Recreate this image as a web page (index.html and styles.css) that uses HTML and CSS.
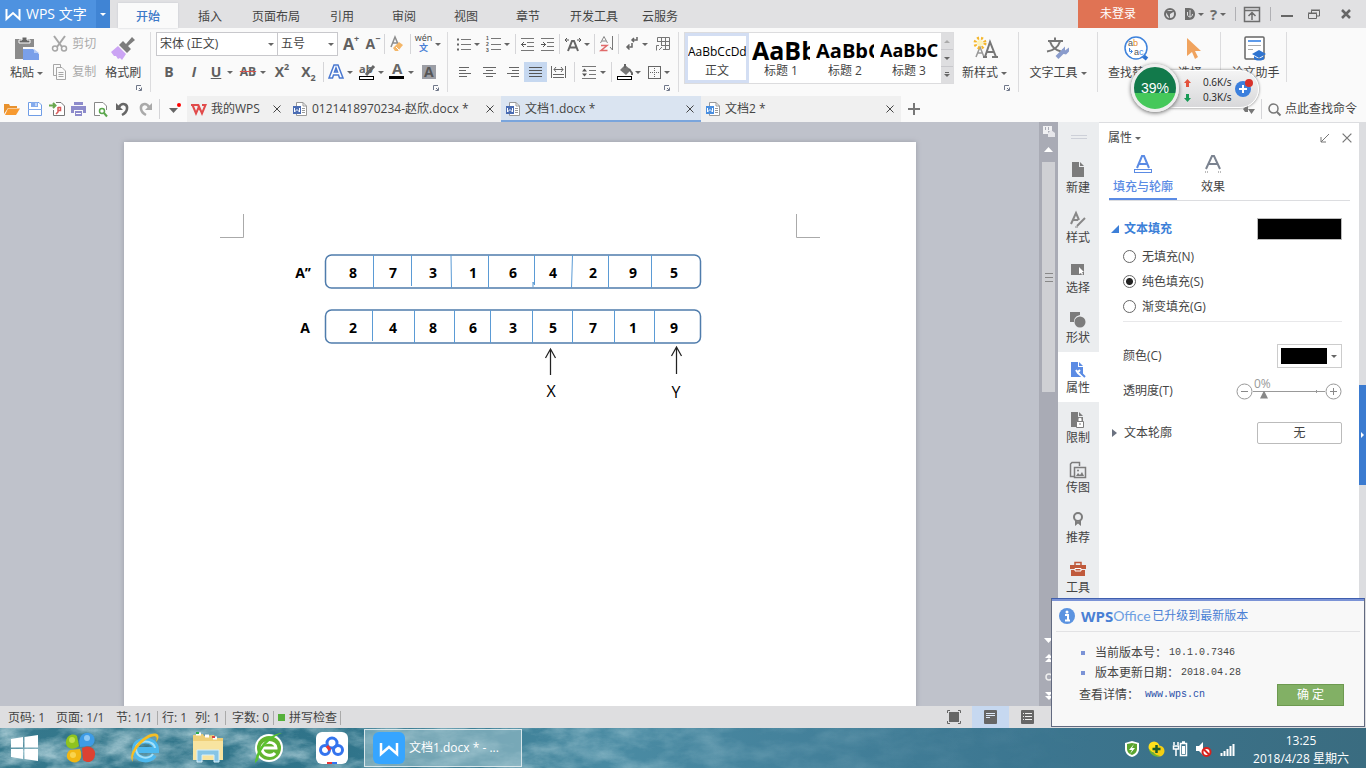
FILE: index.html
```html
<!DOCTYPE html>
<html lang="zh-CN">
<head>
    <meta charset="UTF-8">
    <meta name="viewport" content="width=device-width, initial-scale=1.0">
    <title>文档1.docx - WPS 文字</title>
    <link rel="stylesheet" href="styles.css">
</head>
<body>
    <!-- shared icons -->
    <svg class="sprite" aria-hidden="true">
        <symbol id="i-close" viewBox="0 0 8 8"><path d="M0.5 0.5L7.5 7.5M7.5 0.5L0.5 7.5" fill="none" stroke="currentColor"/></symbol>
        <symbol id="i-launch" viewBox="0 0 6 6"><path d="M0.5 5V0.5H5" fill="none" stroke="#6f7789"/><path d="M2.5 5.5H5.5V2.5M3 3L5 5" fill="none" stroke="#6f7789"/></symbol>
        <symbol id="i-doc" viewBox="0 0 14 14">
            <path d="M3.5 0.5H10L13.5 4V13.5H3.5Z" fill="#fff" stroke="#999"/>
            <path d="M10 0.5V4H13.5M9 6.5H12M9 8.5H12M9 10.5H12" fill="none" stroke="#999"/>
            <rect y="4" width="8" height="8" fill="currentColor"/>
            <path d="M1.5 6V10L4 7.500L6.500 10V6" fill="none" stroke="#fff"/>
        </symbol>
        <symbol id="i-page" viewBox="0 0 16 16"><path d="M2 0H9V5H14V15H2ZM10 0L14 4H10Z" fill="currentColor"/></symbol>
    </svg>

    <header class="titlebar">
        <button type="button" class="app-btn">
            <svg width="16" height="14" viewBox="0 0 16 14"><path d="M1.500 2V12L8 6L14.500 12V2" fill="none" stroke="#fff" stroke-width="2"/></svg>
            WPS 文字
        </button>
        <button type="button" class="app-more" aria-label="菜单"><i class="caret"></i></button>
        <nav class="menu">
            <a href="#" class="menu-on">开始</a>
            <a href="#">插入</a>
            <a href="#" class="menu-wide">页面布局</a>
            <a href="#">引用</a>
            <a href="#">审阅</a>
            <a href="#">视图</a>
            <a href="#">章节</a>
            <a href="#" class="menu-wide">开发工具</a>
            <a href="#">云服务</a>
        </nav>
        <button type="button" class="login">未登录</button>
        <div class="win-tools">
            <button type="button" aria-label="皮肤"><svg width="12" height="12" viewBox="0 0 12 12"><circle cx="6" cy="6" r="5" fill="none" stroke="#6d6d6d" stroke-width="2"/><path d="M1 3L11 3L6 6L6 11L3 6Z" fill="#6d6d6d"/></svg></button>
            <button type="button" aria-label="稻壳"><svg width="10" height="12" viewBox="0 0 10 12"><path d="M0 0H4C8 0 10 3 10 6S8 12 4 12H0Z" fill="#6d6d6d"/><path d="M5 2V9M2.500 4V7C2.500 8 4 9 5 9C6 9 7.500 8 7.500 6" fill="none" stroke="#e1e1e3"/></svg><i class="caret"></i></button>
            <button type="button" aria-label="帮助"><b class="help">?</b><i class="caret"></i></button>
            <span class="bar"></span>
            <button type="button" aria-label="隐藏功能区"><svg width="16" height="15" viewBox="0 0 16 15"><path d="M0.500 0.500H15.500V14.500H0.500ZM0.500 3.500H15.500M8 13V6M4.500 9L8 5.500L11.500 9" fill="none" stroke="#6d6d6d" stroke-width="1.500"/></svg></button>
            <span class="bar"></span>
            <button type="button" aria-label="最小化"><svg width="12" height="12" viewBox="0 0 12 12"><path d="M0 8H12" stroke="#666" stroke-width="2"/></svg></button>
            <button type="button" aria-label="还原"><svg width="12" height="11" viewBox="0 0 12 11"><path d="M0.500 4.500H8.500V9.500H0.500ZM3.500 4V1.500H11.500V7H9" fill="none" stroke="#666"/><path d="M0 4H9M3 1H12" stroke="#666"/></svg></button>
            <button type="button" aria-label="关闭"><svg width="10" height="10" viewBox="0 0 10 10"><path d="M1 1L9 9M9 1L1 9" stroke="#666" stroke-width="2.500"/></svg></button>
        </div>
    </header>

    <section class="ribbon">
        <div class="group clip">
            <button type="button" class="big">
                <svg width="26" height="25" viewBox="0 0 26 25"><path d="M1 2H20V10H9V22H1Z" fill="#8b8b8b"/><path d="M5 6V3H8V0H13V3H16V6Z" fill="#666" stroke="#fafafa"/><path d="M9 12H19L25 17V23H9Z" fill="#7aa0ea"/><path d="M20 12V16H25" fill="#b8cdf5"/></svg>
                <span>粘贴 <i class="caret"></i></span>
            </button>
            <div class="clip-col">
                <button type="button"><svg width="15" height="16" viewBox="0 0 15 16"><path d="M2 0L10 11M13 0L5 11" stroke="#a6a6a6" stroke-width="2"/><circle cx="3" cy="12.500" r="2.500" fill="none" stroke="#a6a6a6" stroke-width="1.500"/><circle cx="12" cy="12.500" r="2.500" fill="none" stroke="#a6a6a6" stroke-width="1.500"/></svg>剪切</button>
                <button type="button"><svg width="15" height="16" viewBox="0 0 15 16"><path d="M4 11.500H1.500V0.500H8.500V3M4.500 3.500H10L13.500 7V15.500H4.500ZM6.500 8.500H11.500M6.500 10.500H11.500M6.500 12.500H11.500" fill="none" stroke="#a6a6a6"/></svg>复制</button>
            </div>
            <button type="button" class="big">
                <svg width="24" height="25" viewBox="0 0 24 25"><path d="M21 0L24 3L17 9L20 12L16 16L8 8L12 4L15 7Z" fill="#7d7d7d"/><path d="M7 9L15 17L11 23L9 21L7 22L5 19L3 19L0 15Z" fill="#cba4f4"/></svg>
                <span>格式刷</span>
            </button>
            <svg class="launch"><use href="#i-launch"/></svg>
        </div>

        <div class="group font-group">
            <div class="row row-font1">
                <label class="pick"><select aria-label="字体"><option>宋体 (正文)</option></select><i class="caret"></i></label>
                <label class="pick"><select aria-label="字号"><option>五号</option></select><i class="caret"></i></label>
                <button type="button" class="glyph glyph-lg">A<sup>+</sup></button>
                <button type="button" class="glyph">A<sup>−</sup></button>
                <span class="bar"></span>
                <button type="button" aria-label="清除格式"><svg width="14" height="16" viewBox="0 0 14 16"><path d="M1 11L5 1L8 8M2.500 7H7" fill="none" stroke="#8d8d8d" stroke-width="1.500"/><path d="M3 12L9 6L13 9L8 15L5 15Z" fill="#f4b668"/><path d="M6 11L9 14" stroke="#fff"/></svg></button>
                <span class="bar"></span>
                <button type="button" class="pinyin"><span><small>wén</small><b>文</b></span><i class="caret"></i></button>
            </div>
            <div class="row row-font2">
                <button type="button" class="glyph">B</button>
                <button type="button" class="glyph"><em>I</em></button>
                <button type="button" class="glyph"><u>U</u><i class="caret"></i></button>
                <button type="button" class="glyph strike"><s>AB</s><i class="caret"></i></button>
                <button type="button" class="glyph">X<sup>2</sup></button>
                <button type="button" class="glyph">X<sub>2</sub></button>
                <span class="bar"></span>
                <button type="button" aria-label="文字效果"><svg width="16" height="16" viewBox="0 0 16 16"><path d="M1 14L6 1H10L15 14H11.500L10.500 11H5.500L4.500 14ZM6.500 8H9.500L8 4Z" fill="#fff" stroke="#4a78d0" stroke-width="1.500"/></svg><i class="caret"></i></button>
                <button type="button" aria-label="突出显示"><svg width="16" height="16" viewBox="0 0 16 16"><text x="0" y="9" font-size="11" font-weight="700" fill="#666">ab</text><path d="M7 11L15 2" stroke="#666" stroke-width="3"/><rect x="0.500" y="12.500" width="14" height="3" fill="#fff" stroke="#000"/></svg><i class="caret"></i></button>
                <button type="button" aria-label="字体颜色"><svg width="16" height="16" viewBox="0 0 16 16"><text x="3" y="10" font-size="15" font-weight="700" fill="#666">A</text><rect y="12" width="15" height="3"/></svg><i class="caret"></i></button>
                <button type="button" aria-label="字符底纹"><svg width="14" height="14" viewBox="0 0 14 14"><rect width="14" height="14" fill="#9c9ea5"/><text x="2" y="12" font-size="14" font-weight="700" fill="#555">A</text></svg></button>
            </div>
            <svg class="launch"><use href="#i-launch"/></svg>
        </div>

        <div class="group para-group">
            <div class="row row-para1">
                <button type="button" aria-label="项目符号"><svg width="14" height="14" viewBox="0 0 14 14"><path d="M0 2.500H2M0 7.500H2M0 12.500H2" stroke="#666" stroke-width="2"/><path d="M4 2.500H14M4 7.500H14M4 12.500H14" stroke="#777"/></svg><i class="caret"></i></button>
                <button type="button" aria-label="编号"><svg class="digits" width="15" height="16" viewBox="0 0 15 16"><text x="0" y="4">1</text><text x="0" y="10">2</text><text x="0" y="16">3</text><path d="M5 2.500H15M5 8.500H15M5 13.500H15" stroke="#777"/></svg><i class="caret"></i></button>
                <span class="bar"></span>
                <button type="button" aria-label="减少缩进"><svg width="13" height="13" viewBox="0 0 13 13"><path d="M0 0.500H13M6 4.500H13M6 8.500H13M0 12.500H13" stroke="#777"/><path d="M0 6.500H5M3 4L0.500 6.500L3 9" fill="none" stroke="#555"/></svg></button>
                <button type="button" aria-label="增加缩进"><svg width="13" height="13" viewBox="0 0 13 13"><path d="M0 0.500H13M6 4.500H13M6 8.500H13M0 12.500H13" stroke="#777"/><path d="M0 6.500H5M2 4L4.500 6.500L2 9" fill="none" stroke="#555"/></svg></button>
                <span class="bar"></span>
                <button type="button" aria-label="中文版式"><svg width="16" height="15" viewBox="0 0 16 15"><path d="M3 14L7 4H9L13 14M5 10.500H11" fill="none" stroke="#666" stroke-width="2"/><path d="M0 3H4M2 1L0 3L2 5M16 3H12M14 1L16 3L14 5" fill="none" stroke="#555"/></svg><i class="caret"></i></button>
                <span class="bar"></span>
                <button type="button" aria-label="排序"><svg width="14" height="16" viewBox="0 0 14 16"><path d="M0.500 7L4 0.500L7.500 7M2 5H6" fill="none" stroke="#888"/><path d="M1 9.500H7L1 14.500H7.500" fill="none" stroke="#e06a6a" stroke-width="1.500"/><path d="M12.500 0V14L10 11" fill="none" stroke="#777"/></svg></button>
                <span class="bar"></span>
                <button type="button" aria-label="段落标记"><svg width="12" height="14" viewBox="0 0 12 14"><path d="M10 0V3H5M7 1L5 3L7 5M5 6V10H0M2.500 7.500L0 10L2.500 12.500" fill="none" stroke="#666" stroke-width="1.500"/></svg><i class="caret"></i></button>
                <button type="button" aria-label="表格"><svg width="14" height="14" viewBox="0 0 14 14"><path d="M1.500 5V0.500H13.500V12.500H7M5.500 0.500V8M9.500 0.500V12.500M1.500 4.500H13.500M5 8.500H13.500M0.500 13.500V8.500H3M3 13L6 10" fill="none" stroke="#777"/></svg></button>
            </div>
            <div class="row row-para2">
                <button type="button" aria-label="左对齐"><svg width="13" height="11" viewBox="0 0 13 11"><path d="M0 0.500H10M0 3.500H7M0 6.500H12M0 9.500H8" stroke="#666"/></svg></button>
                <button type="button" aria-label="居中"><svg width="13" height="11" viewBox="0 0 13 11"><path d="M0 0.500H13M3 3.500H10M0 6.500H13M3 9.500H10" stroke="#666"/></svg></button>
                <button type="button" aria-label="右对齐"><svg width="13" height="11" viewBox="0 0 13 11"><path d="M3 0.500H13M6 3.500H13M1 6.500H13M5 9.500H13" stroke="#666"/></svg></button>
                <button type="button" class="pressed" aria-label="两端对齐"><svg width="13" height="11" viewBox="0 0 13 11"><path d="M0 0.500H13M0 3.500H13M0 6.500H13M0 9.500H13" stroke="#555"/></svg></button>
                <button type="button" aria-label="分散对齐"><svg width="15" height="12" viewBox="0 0 15 12"><path d="M0.500 0V12M14.500 0V12M2 8.500H13M2 11.500H13M3 3.500H12M5 1L3 3.500L5 6M10 1L12 3.500L10 6" fill="none" stroke="#666"/></svg></button>
                <span class="bar"></span>
                <button type="button" aria-label="行距"><svg width="15" height="13" viewBox="0 0 15 13"><path d="M0 0.500H14M7 4.500H14M7 8.500H14M0 12.500H14" stroke="#777"/><path d="M0 5.500L2.500 2.500L5 5.500ZM0 7.500L2.500 10.500L5 7.500Z" fill="#555"/></svg><i class="caret"></i></button>
                <span class="bar"></span>
                <button type="button" aria-label="底纹"><svg width="15" height="16" viewBox="0 0 15 16"><path d="M3 6L8 1L14 6L9 11Z" fill="#777"/><path d="M8 0V4M12 5L15 9V11" stroke="#666" stroke-width="2" fill="none"/><rect x="0.500" y="12.500" width="14" height="3" fill="#fff" stroke="#000"/></svg><i class="caret"></i></button>
                <button type="button" aria-label="边框"><svg width="13" height="13" viewBox="0 0 13 13"><rect x="0.500" y="0.500" width="12" height="12" fill="none" stroke="#666"/><path d="M6.500 2V11M2 6.500H11" stroke="#666" stroke-dasharray="1 1"/></svg><i class="caret"></i></button>
            </div>
            <svg class="launch"><use href="#i-launch"/></svg>
        </div>

        <div class="group style-group">
            <div class="gallery">
                <button type="button" class="style-on"><span class="demo">AaBbCcDd</span>正文</button>
                <button type="button"><span class="demo demo-1">AaBb</span>标题 1</button>
                <button type="button"><span class="demo demo-2">AaBbC</span>标题 2</button>
                <button type="button"><span class="demo demo-3">AaBbC</span>标题 3</button>
                <div class="gallery-nav">
                    <button type="button" aria-label="上"><i class="caret caret-up"></i></button>
                    <button type="button" aria-label="下"><i class="caret"></i></button>
                    <button type="button" aria-label="更多"><i class="caret caret-more"></i></button>
                </div>
            </div>
            <button type="button" class="big">
                <svg width="26" height="25" viewBox="0 0 26 25"><path d="M4 20L8 10L12 20M5 16H11" fill="none" stroke="#999" stroke-width="1.500"/><path d="M13 20L18 5L24 20M15 15H22M11 20H15M20 20H26" fill="none" stroke="#777" stroke-width="2"/><circle cx="8" cy="6" r="5" fill="none" stroke="#f5b72c" stroke-width="3" stroke-dasharray="2 2"/><circle cx="8" cy="6" r="3" fill="#fff3b8"/></svg>
                <span>新样式 <i class="caret"></i></span>
            </button>
            <svg class="launch"><use href="#i-launch"/></svg>
        </div>

        <div class="group tool-group">
            <button type="button" class="big">
                <svg width="24" height="24" viewBox="0 0 24 24"><path d="M2 3.500H17M9 0V3M4 4C6 10 11 13 15 14M14 4C12 10 7 13 1 14" fill="none" stroke="#777" stroke-width="2"/><path d="M11 20L18 13" stroke="#8a9ccc" stroke-width="4"/><path d="M23 10L19 13V9L16 12V16L20 17L23 14Z" fill="#8a9ccc"/></svg>
                <span>文字工具 <i class="caret"></i></span>
            </button>
        </div>
        <div class="group find-group">
            <button type="button" class="big">
                <svg width="25" height="25" viewBox="0 0 25 25"><path d="M18 18L23 22" stroke="#2f74d0" stroke-width="4"/><circle cx="12" cy="11" r="11" fill="#fff" stroke="#3f83dc" stroke-width="1.500"/><g class="find-text"><text x="4" y="9">a<tspan fill="#e58a2e">b</tspan></text><text x="10" y="18">a<tspan fill="#3f83dc">c</tspan></text></g><path d="M5.500 11V14.500H8M6.500 12.500L8.500 14.500L6.500 16.500" fill="none" stroke="#3f83dc"/></svg>
                <span>查找替换 <i class="caret"></i></span>
            </button>
            <button type="button" class="big">
                <svg width="16" height="25" viewBox="0 0 16 25"><path d="M1 1L15 14H9L12 20L9 22L6 15L1 19Z" fill="#f0a35e"/></svg>
                <span>选择 <i class="caret"></i></span>
            </button>
        </div>
        <div class="group paper-group">
            <button type="button" class="big">
                <svg width="22" height="25" viewBox="0 0 22 25"><rect x="1" y="0" width="19" height="22" rx="1" fill="#fff" stroke="#666" stroke-width="1.500"/><path d="M4 4H17" stroke="#5f9bea" stroke-width="2"/><path d="M4 8.500H17M4 12.500H9" stroke="#aaa"/><path d="M8 17L15 13L22 17L15 21Z" fill="#2f74d0"/><path d="M10 19V22C12 24 18 24 20 22V19L15 22Z" fill="#2f74d0"/></svg>
                <span>论文助手</span>
            </button>
        </div>
    </section>

    <!-- network speed ball floating above the window -->
    <aside class="speed">
        <div class="speed-pill">
            <p><svg width="7" height="8" viewBox="0 0 7 8"><path d="M3.500 0L7 4H5V8H2V4H0Z" fill="#e3523c"/></svg>0.6K/s</p>
            <p><svg width="7" height="8" viewBox="0 0 7 8"><path d="M3.500 8L7 4H5V0H2V4H0Z" fill="#179a55"/></svg>0.3K/s</p>
            <button type="button" class="speed-plus" aria-label="加速"><svg width="20" height="20" viewBox="0 0 20 20"><circle cx="9" cy="11" r="8" fill="#3b7fdd"/><path d="M9 7V15M5 11H13" stroke="#fff" stroke-width="2"/><circle cx="15" cy="5" r="4" fill="#d7322c"/></svg></button>
        </div>
        <div class="speed-ball">39%</div>
    </aside>

    <div class="docbar">
        <div class="quick">
            <button type="button" aria-label="打开"><svg width="16" height="12" viewBox="0 0 16 12"><path d="M0 11V1H5L6 3H13V5H4Z" fill="#e8912d"/><path d="M4 5.500H16L12 12H1Z" fill="#f79a31"/></svg></button>
            <button type="button" aria-label="保存"><svg width="14" height="14" viewBox="0 0 14 14"><path d="M0.500 0.500H11L13.500 3V13.500H0.500Z" fill="#fff" stroke="#6f9de6"/><path d="M3 0H10V5H3ZM0 7H14V8H0Z" fill="#85abec"/><path d="M8 1V4" stroke="#fff"/></svg></button>
            <button type="button" aria-label="输出为PDF"><svg width="16" height="14" viewBox="0 0 16 14"><path d="M7 0.500H12L15.500 4V13.500H4.500V8" fill="#fff" stroke="#777"/><path d="M0 3.500H6M4 1L6.500 3.500L4 6" fill="none" stroke="#6aa84f" stroke-width="2"/><path d="M9 5.500H11.500V8.500H9M9 5V10L7 12" fill="none" stroke="#d85959" stroke-width="1.500"/></svg></button>
            <button type="button" aria-label="打印"><svg width="15" height="14" viewBox="0 0 15 14"><path d="M3 0H12V3H3ZM0 4H15V11H12V8H3V11H0ZM4 9H11V14H4Z" fill="#8d8bcb"/><path d="M5 11.500H10" stroke="#fff"/></svg></button>
            <button type="button" aria-label="打印预览"><svg width="13" height="15" viewBox="0 0 13 15"><path d="M6 13.500H0.500V0.500H9L12.500 4V8" fill="#fff" stroke="#888"/><circle cx="8" cy="9" r="2.500" fill="none" stroke="#5aa64c" stroke-width="1.500"/><path d="M10 11L13 14.500" stroke="#5aa64c" stroke-width="2"/></svg></button>
            <button type="button" aria-label="撤销"><svg width="13" height="14" viewBox="0 0 13 14"><path d="M3 5C6 0 12 2 11 7C10.500 10 8 12 6 13" fill="none" stroke="#666" stroke-width="2.500"/><path d="M0 1V8H7Z" fill="#666"/></svg></button>
            <button type="button" aria-label="恢复"><svg width="13" height="14" viewBox="0 0 13 14"><path d="M10 5C7 0 1 2 2 7C2.500 10 5 12 7 13" fill="none" stroke="#aaa" stroke-width="2.500"/><path d="M13 1V8H6Z" fill="#aaa"/></svg></button>
            <span class="bar"></span>
            <button type="button" aria-label="自定义"><svg width="14" height="12" viewBox="0 0 14 12"><path d="M1 5H10L5.500 10Z" fill="#666"/><circle cx="11" cy="2" r="2" fill="#f00"/></svg></button>
        </div>
        <nav class="doctabs">
            <a href="#" class="doctab doctab-home"><svg width="16" height="11" viewBox="0 0 16 11"><path d="M0 1H7L9 6M1.500 1L5 9.500L8 2.500L11 9.500L14.500 1H11" fill="none" stroke="#e14a4a" stroke-width="2"/></svg><span>我的WPS</span><svg class="x"><use href="#i-close"/></svg></a>
            <a href="#" class="doctab"><svg class="doc-icon"><use href="#i-doc"/></svg><span>0121418970234-赵欣.docx *</span><svg class="x"><use href="#i-close"/></svg></a>
            <a href="#" class="doctab doctab-on"><svg class="doc-icon"><use href="#i-doc"/></svg><span>文档1.docx *</span><svg class="x"><use href="#i-close"/></svg></a>
            <a href="#" class="doctab"><svg class="doc-icon doc-light"><use href="#i-doc"/></svg><span>文档2 *</span><svg class="x"><use href="#i-close"/></svg></a>
        </nav>
        <button type="button" class="doc-add" aria-label="新建"><svg width="12" height="12" viewBox="0 0 12 12"><path d="M6 0V12M0 6H12" stroke="#777" stroke-width="2"/></svg></button>
        <svg class="doc-list" width="12" height="10" viewBox="0 0 12 10"><path d="M0 5L5 0V8H2ZM5 5H12L8.500 10Z" fill="#777"/></svg>
        <span class="bar"></span>
        <button type="button" class="search"><svg width="13" height="13" viewBox="0 0 13 13"><circle cx="5.500" cy="5.500" r="4.500" fill="none" stroke="#777" stroke-width="1.500"/><path d="M9 9L12.500 12.500" stroke="#777" stroke-width="2"/></svg>点此查找命令</button>
    </div>

    <main class="work">
        <div class="canvas">
            <article class="paper">
                <svg class="drawing" width="792" height="300" viewBox="0 0 792 300">
                    <path d="M96 95.500H119.500V72M696 95.500H672.500V72" fill="none" stroke="#aaa"/>
                    <g fill="#fff" stroke="#4f7cac" stroke-width="1.500">
                        <rect x="201.500" y="113" width="375" height="33" rx="6"/>
                        <rect x="201.500" y="168" width="375" height="33" rx="6"/>
                    </g>
                    <path d="M249.500 113V146M287.500 113V144M327 113L327.500 146M364.500 113V146M410.500 113V143L409 140V145M448.500 113L447.500 146M484.500 113V146M527.500 113V146M248.500 168V199M290.500 168V201M330.500 168V201M366.500 168V201M408.500 168V201M448.500 168V201M490.500 168V201M530.500 168V201" fill="none" stroke="#5b9bd5"/>
                    <g class="nums">
                        <text x="179" y="136">A’’</text>
                        <text x="229" y="136">8</text><text x="269" y="136">7</text><text x="309" y="136">3</text>
                        <text x="349" y="136">1</text><text x="389" y="136">6</text><text x="429" y="136">4</text>
                        <text x="469" y="136">2</text><text x="509" y="136">9</text><text x="550" y="136">5</text>
                        <text x="181" y="191">A</text>
                        <text x="229" y="191">2</text><text x="269" y="191">4</text><text x="309" y="191">8</text>
                        <text x="349" y="191">6</text><text x="389" y="191">3</text><text x="429" y="191">5</text>
                        <text x="469" y="191">7</text><text x="509" y="191">1</text><text x="550" y="191">9</text>
                    </g>
                    <path d="M426.500 233V207M421.500 216L426.500 207L431.500 216M552.500 232V205M547.500 214L552.500 205L557.500 214" fill="none" stroke="#222" stroke-width="1.250"/>
                    <g class="marks"><text x="427" y="255">X</text><text x="552" y="256">Y</text></g>
                </svg>
            </article>
        </div>

        <div class="scroll">
            <svg width="12" height="12" viewBox="0 0 12 12"><path d="M0 0H9V5H5V8H0Z" fill="#f0f0f2"/><path d="M2.500 1V4M5.500 1V4" stroke="#a9abb5"/><path d="M5 7L8 4L12 7V11H5Z" fill="#e6e6ea"/></svg>
            <svg width="9" height="5" viewBox="0 0 9 5"><path d="M0 5L4.500 0L9 5Z" fill="#fff"/></svg>
            <div class="thumb"><svg width="8" height="9" viewBox="0 0 8 9"><path d="M0 0.500H8M0 4.500H8M0 8.500H8" stroke="#888"/></svg></div>
            <div class="scroll-end">
                <svg width="9" height="5" viewBox="0 0 9 5"><path d="M0 0L4.500 5L9 0Z" fill="#fff"/></svg>
                <svg width="8" height="8" viewBox="0 0 8 8"><path d="M0 4L4 0L8 4ZM0 8L4 4L8 8Z" fill="#fff"/></svg>
                <svg width="8" height="8" viewBox="0 0 8 8"><circle cx="4" cy="4" r="3" fill="none" stroke="#eee" stroke-width="1.500"/></svg>
                <svg width="8" height="8" viewBox="0 0 8 8"><path d="M0 0L4 4L8 0ZM0 4L4 8L8 4Z" fill="#fff"/></svg>
            </div>
        </div>

        <nav class="side">
            <span class="grip"></span>
            <a href="#"><svg class="ico"><use href="#i-page"/></svg>新建</a>
            <a href="#"><svg class="ico" viewBox="0 0 16 16"><path d="M1 12L6 1L9 8M3 8H8" fill="none" stroke="#888" stroke-width="2"/><path d="M7 14L15 6" stroke="#888" stroke-width="2"/><path d="M5 15H8" stroke="#888"/></svg>样式</a>
            <a href="#"><svg class="ico" viewBox="0 0 16 16"><path d="M1 2H14V13H1Z" fill="#7c7c7c"/><path d="M9 5L14 10H12L13 12L12 13L11 11L9 12Z" fill="#fff"/></svg>选择</a>
            <a href="#"><svg class="ico" viewBox="0 0 16 16"><path d="M0 0H10V3C6 4 4 6 4 10H0Z" fill="#7c7c7c"/><circle cx="10" cy="10" r="5.500" fill="#7c7c7c"/></svg>形状</a>
            <a href="#" class="side-on"><svg class="ico" viewBox="0 0 16 16"><path d="M1 0H8V5H13V15H1ZM9 0L13 4H9Z" fill="#5b8be4"/><path d="M6 8L8 11L14 16M7 11L10 8" fill="none" stroke="#fff" stroke-width="2"/><path d="M11 11L15 15" stroke="#5b8be4" stroke-width="2"/></svg>属性</a>
            <a href="#"><svg class="ico" viewBox="0 0 16 16"><path d="M1 0H8V5H13V15H1ZM9 0L13 4H9Z" fill="#7c7c7c"/><path d="M6.500 9.500H13.500V15.500H6.500ZM8 9V7C8 5 12 5 12 7V9M10 11V13" fill="#fff" stroke="#7c7c7c"/></svg>限制</a>
            <a href="#"><svg class="ico" viewBox="0 0 16 16"><path d="M4 14.500H0.500V2L2 0.500H9.500V4M4.500 5.500H15.500V15.500H4.500Z" fill="none" stroke="#7c7c7c" stroke-width="1.500"/><path d="M6 14L8 11L10 13L12 10L14 14Z" fill="#7c7c7c"/><circle cx="8" cy="8.500" r="1" fill="#7c7c7c"/></svg>传图</a>
            <a href="#"><svg class="ico" viewBox="0 0 16 16"><circle cx="8" cy="5" r="4" fill="none" stroke="#7c7c7c" stroke-width="2"/><path d="M5 8V14L8 11.500L11 14V8L8 10Z" fill="#7c7c7c"/></svg>推荐</a>
            <a href="#"><svg class="ico" viewBox="0 0 16 16"><path d="M5 3V0.500H11V3" fill="none" stroke="#c05a3c" stroke-width="1.500"/><path d="M0 3H16V7H0ZM1 8H15V14H1Z" fill="#c05a3c"/><path d="M5 6.500H11V9H5Z" fill="#c05a3c" stroke="#fff"/></svg>工具</a>
        </nav>

        <aside class="panel">
            <div class="panel-head">
                <h2>属性 <i class="caret"></i></h2>
                <svg width="10" height="9" viewBox="0 0 10 9"><path d="M9 0L1 8M1 3V8H6" fill="none" stroke="#777"/></svg>
                <svg class="x-big" viewBox="0 0 8 8"><use href="#i-close"/></svg>
            </div>
            <nav class="panel-tabs">
                <a href="#" class="panel-on"><svg width="18" height="18" viewBox="0 0 18 18"><path d="M3 13L8 1H10L15 13M5 9H13" fill="none" stroke="#5b8be4" stroke-width="2"/><rect x="0.500" y="14.500" width="17" height="3" fill="#fff" stroke="#5b8be4"/></svg>填充与轮廓</a>
                <a href="#"><svg width="18" height="18" viewBox="0 0 18 18"><path d="M2 14L8 1H10L16 14M5 9H13" fill="none" stroke="#7b8390" stroke-width="2"/><path d="M1 17H4M14 17H17" stroke="#bbb" stroke-width="2" stroke-dasharray="1 1"/></svg>效果</a>
            </nav>
            <div class="line line-head">
                <h3><svg width="8" height="8" viewBox="0 0 8 8"><path d="M8 0V8H0Z" fill="#3c7fd8"/></svg>文本填充</h3>
                <span class="swatch"></span>
            </div>
            <fieldset class="fills">
                <label><input type="radio" name="fill">无填充(N)</label>
                <label><input type="radio" name="fill" checked>纯色填充(S)</label>
                <label><input type="radio" name="fill">渐变填充(G)</label>
            </fieldset>
            <div class="line line-color">
                <span>颜色(C)</span>
                <button type="button" class="color" aria-label="颜色"><span></span><i class="caret"></i></button>
            </div>
            <div class="line line-alpha">
                <label for="alpha">透明度(T)</label>
                <div class="slider">
                    <button type="button" aria-label="减少"><svg width="17" height="17" viewBox="0 0 17 17"><circle cx="8.500" cy="8.500" r="7.500" fill="#fff" stroke="#999"/><path d="M5 8.500H12" stroke="#888"/></svg></button>
                    <div class="track"><output for="alpha">0%</output><input type="range" id="alpha" min="0" max="100" value="0"></div>
                    <button type="button" aria-label="增加"><svg width="17" height="17" viewBox="0 0 17 17"><circle cx="8.500" cy="8.500" r="7.500" fill="#fff" stroke="#999"/><path d="M5 8.500H12M8.500 5V12" stroke="#888"/></svg></button>
                </div>
            </div>
            <div class="line line-outline">
                <h3><svg width="8" height="8" viewBox="0 0 8 8"><path d="M1 0L6 4L1 8Z" fill="#6b7280"/></svg>文本轮廓</h3>
                <button type="button" class="none-btn">无</button>
            </div>
        </aside>
        <div class="edge"><button type="button" aria-label="展开"><i></i></button></div>
    </main>

    <footer class="status">
        <span class="st-page">页码: 1</span>
        <span class="st-pages">页面: 1/1</span>
        <span class="st-sec">节: 1/1</span>
        <span class="st-row">行: 1</span>
        <span class="st-col">列: 1</span>
        <span class="st-num">字数: 0</span>
        <span class="st-spell"><i></i>拼写检查</span>
        <div class="views">
            <button type="button" aria-label="全屏"><svg width="14" height="14" viewBox="0 0 14 14"><path d="M0.500 3V0.500H3M11 0.500H13.500V3M13.500 11V13.500H11M3 13.500H0.500V11" fill="none" stroke="#666"/><rect x="2" y="2" width="10" height="10" fill="#666"/></svg></button>
            <button type="button" class="view-on" aria-label="页面视图"><svg width="13" height="14" viewBox="0 0 13 14"><rect width="13" height="14" rx="1" fill="#666"/><path d="M2 3.500H11M2 5.500H11M2 7.500H6" stroke="#dde8f8"/></svg></button>
            <button type="button" aria-label="大纲"><svg width="13" height="14" viewBox="0 0 13 14"><rect width="13" height="14" rx="1" fill="#666"/><path d="M2 3.500H3M4 3.500H11M2 6.500H3M4 6.500H11M2 9.500H3M4 9.500H11" stroke="#eee"/></svg></button>
        </div>
    </footer>

    <section class="notice">
        <header>
            <svg width="18" height="18" viewBox="0 0 18 18"><circle cx="9" cy="9" r="8" fill="#5b93e0"/><circle cx="9" cy="5" r="1.500" fill="#fff"/><path d="M7 8H10V13M7 13.500H12" fill="none" stroke="#fff" stroke-width="2"/></svg>
            <strong>WPS</strong><span class="office">Office</span>
            <span class="notice-title">已升级到最新版本</span>
        </header>
        <ul>
            <li>当前版本号： <span class="mono">10.1.0.7346</span></li>
            <li>版本更新日期： <span class="mono">2018.04.28</span></li>
        </ul>
        <div class="notice-foot">
            <p>查看详情： <a href="#" class="mono">www.wps.cn</a></p>
            <button type="button">确 定</button>
        </div>
    </section>

    <footer class="taskbar">
        <svg class="sky" preserveAspectRatio="none" aria-hidden="true">
            <defs>
                <filter id="clouds" x="0" y="0" width="100%" height="100%">
                    <feTurbulence type="fractalNoise" baseFrequency="0.03 0.06" numOctaves="5" seed="11"/>
                    <feColorMatrix values="0 0 0 0 0.55  0 0 0 0 0.74  0 0 0 0 0.79  1.800 0 0 0 -0.600"/>
                </filter>
                <linearGradient id="fade"><stop offset="0" stop-color="#ddd"/><stop offset="0.350" stop-color="#aaa"/><stop offset="0.550" stop-color="#333"/><stop offset="0.800" stop-color="#000"/></linearGradient>
                <mask id="fade-mask"><rect width="100%" height="100%" fill="url(#fade)"/></mask>
            </defs>
            <g mask="url(#fade-mask)"><rect width="100%" height="100%" filter="url(#clouds)"/></g>
        </svg>
        <div class="apps">
            <button type="button" aria-label="开始"><svg width="28" height="26" viewBox="0 0 28 26"><path d="M0 4L12 2V12.500H0ZM13.500 2L27 0V12.500H13.500ZM0 14H12V24L0 22ZM13.500 14H27V26L13.500 24Z" fill="#fff"/></svg></button>
            <button type="button" aria-label="浏览"><svg width="32" height="32" viewBox="0 0 32 32"><path d="M14 14C6 20 0 15 1 9S8 1 12 4Z" fill="#8fc31f"/><path d="M15 15C12 5 18 0 24 1S32 11 26 14Z" fill="#3d9be6"/><path d="M15 17C19 27 13 32 7 30S0 22 5 18Z" fill="#f2b713"/><path d="M17 16C24 12 31 16 30 23S23 32 18 28Z" fill="#dc4232"/><circle cx="22" cy="6" r="3" fill="#8fcaf5"/><circle cx="7" cy="8" r="3" fill="#bfe04a"/><circle cx="8" cy="23" r="3" fill="#f9d44e"/></svg></button>
            <button type="button" aria-label="Internet Explorer"><svg width="32" height="32" viewBox="0 0 32 32"><path d="M25 23C21 30 6 29 6 17C6 6 27 5 27 18H9" fill="none" stroke="#4db8ee" stroke-width="6"/><path d="M24 22C20 28 7 27 7 16C7 8 25 7 26 16" fill="none" stroke="#a4e2fb" stroke-width="2"/><path d="M4 30C-4 20 18 -2 28 2C31 4 29 8 27 10C29 5 27 3 22 5C12 9 2 22 4 30Z" fill="#f6be25"/></svg></button>
            <button type="button" aria-label="资源管理器"><svg width="32" height="32" viewBox="0 0 32 32"><path d="M1 3L11 2L12 4L22 3L23 6H31V28H1Z" fill="#efcf78"/><path d="M4 2H9M13 4H17M21 6H25" stroke="#fff" stroke-width="3"/><path d="M4 1H7" stroke="#2dae4d" stroke-width="2"/><path d="M20 5H23" stroke="#d44" stroke-width="2"/><path d="M1 9H31V28H1Z" fill="#f8e4a0"/><path d="M5 30V18H27V30H22V23H10V30Z" fill="#86c5e6" stroke="#d7effa"/></svg></button>
            <button type="button" aria-label="360浏览器"><svg width="32" height="32" viewBox="0 0 32 32"><circle cx="16" cy="16" r="14" fill="#fff"/><circle cx="16" cy="16" r="12" fill="#62b52f"/><path d="M22 21C19 25 9 24 9 16S23 9 23 16H10" fill="none" stroke="#fff" stroke-width="3"/><path d="M2 31C3 18 14 2 29 1C18 5 7 16 5 28Z" fill="#58c12e"/></svg></button>
            <button type="button" aria-label="网盘"><svg width="32" height="32" viewBox="0 0 32 32"><rect width="32" height="32" rx="6" fill="#fff"/><g fill="none" stroke="#3474ee" stroke-width="3"><circle cx="16" cy="11" r="5"/><circle cx="9" cy="18" r="4.500"/><circle cx="22" cy="18" r="4.500"/></g><path d="M11 14L14 18" stroke="#e33" stroke-width="3"/><path d="M11 31H16" stroke="#e33" stroke-width="2"/><path d="M16 31H21" stroke="#3474ee" stroke-width="2"/></svg></button>
        </div>
        <button type="button" class="task"><svg width="32" height="32" viewBox="0 0 32 32"><rect width="32" height="32" rx="6" fill="#36a5ff"/><path d="M8 11V22L16 15L24 22V11" fill="none" stroke="#fff" stroke-width="2.500"/></svg>文档1.docx * - ...</button>
        <div class="tray">
            <svg width="16" height="16" viewBox="0 0 16 16"><path d="M8 0L15 2V8C15 12 12 15 8 16C4 15 1 12 1 8V2Z" fill="#fff"/><path d="M8 2L13 3V8C13 11 11 13 8 14C5 13 3 11 3 8V3Z" fill="#5ba52f"/><path d="M10 3L5 9H8L6 13L11 7H8Z" fill="#fff"/></svg>
            <svg width="17" height="16" viewBox="0 0 17 16"><circle cx="6" cy="6" r="5.500" fill="#ffe01b"/><circle cx="11" cy="10" r="5.500" fill="#f4cf12"/><path d="M1 8C2 14 8 17 12 15C7 14 4 11 1 8Z" fill="#6db52d"/><path d="M8.500 4V12M4.500 8H12.500" stroke="#1b5a2a" stroke-width="2.500"/></svg>
            <svg width="15" height="16" viewBox="0 0 15 16"><path d="M7.500 2.500H13.500V14.500H7.500ZM9 1H12M1 1V4M5 1V4M0.500 5H5.500V8H0.500ZM3 8V15" fill="none" stroke="#fff" stroke-width="1.500"/><path d="M9 5H12V13H9Z" fill="#fff"/></svg>
            <svg width="16" height="16" viewBox="0 0 16 16"><path d="M0 5H3L7 1V14L3 10H0Z" fill="#fff"/><circle cx="10.500" cy="11" r="4" fill="#fff" stroke="#d8201c" stroke-width="2"/><path d="M8 8.500L13 13.500" stroke="#d8201c" stroke-width="2"/></svg>
            <svg width="16" height="13" viewBox="0 0 16 13"><path d="M1.500 13V10M4.500 13V8M7.500 13V6M10.500 13V3M13.500 13V1" stroke="#fff" stroke-width="2"/></svg>
        </div>
        <time class="clock" datetime="2018-04-28T13:25">13:25<br>2018/4/28 星期六</time>
    </footer>
</body>
</html>
```
FILE: styles.css
```css
* {
    box-sizing: border-box;
}

body {
    display: flex;
    flex-direction: column;
    height: 100vh;
    margin: 0;
    overflow: hidden;
    background: #fafafa;
    color: #444;
    font-family: "Open Sans", "Noto Sans CJK SC", sans-serif;
    font-size: 12px;
    line-height: 16px;
}

h2,
h3,
p,
ul,
fieldset {
    margin: 0;
    padding: 0;
    border: 0;
    font-size: 12px;
    font-weight: normal;
    list-style: none;
}

a {
    color: inherit;
    text-decoration: none;
}

button,
select {
    margin: 0;
    padding: 0;
    border: 0;
    background: none;
    color: inherit;
    font: inherit;
    white-space: nowrap;
}

svg {
    flex: none;
    overflow: visible;
}

.sprite {
    position: absolute;
    width: 0;
    height: 0;
    overflow: hidden;
}

.caret {
    display: inline-block;
    flex: none;
    width: 0;
    border: 3px solid transparent;
    border-top-color: #666;
    border-bottom-width: 0;
    vertical-align: middle;
}

.bar {
    justify-self: center;
    width: 1px;
    height: 20px;
    background: #d5d5d8;
}

/* title bar */
.titlebar {
    display: flex;
    flex: none;
    height: 28px;
    background: #e1e1e3;
}

.app-btn {
    display: flex;
    align-items: center;
    gap: 5px;
    width: 96px;
    padding-left: 5px;
    background: #4e92e0;
    color: #fff;
    font-size: 14px;
}

.app-more {
    display: flex;
    align-items: center;
    justify-content: center;
    width: 14px;
    background: #4084d4;
}

.app-more .caret {
    border-top-color: #fff;
}

.menu {
    display: flex;
    flex: 1;
    align-items: flex-end;
    padding-left: 8px;
}

.menu a {
    width: 62px;
    height: 25px;
    padding-top: 1px;
    line-height: 25px;
    text-align: center;
}

.menu .menu-wide {
    width: 70px;
}

.menu .menu-on {
    width: 60px;
    margin-right: 1px;
    background: #fafafa;
    color: #3c78c8;
    font-weight: 500;
    box-shadow: 0 0 2px #c8cad0;
}

.login {
    width: 80px;
    background: #e07354;
    color: #fff;
}

.win-tools {
    display: grid;
    grid-template-columns: 24px 24px 24px 10px 24px 12px 22px 32px 32px;
    align-items: center;
    padding-right: 4px;
}

.win-tools button {
    display: flex;
    align-items: center;
    justify-content: center;
    gap: 3px;
}

.win-tools .bar {
    height: 14px;
    background: #b0b0b4;
}

.help {
    color: #6d6d6d;
    font-size: 15px;
}

/* ribbon */
.ribbon {
    display: flex;
    flex: none;
    height: 68px;
}

.group {
    position: relative;
    display: flex;
    flex: none;
    height: 60px;
    margin-top: 4px;
    border-right: 1px solid #dcdcde;
}

.launch {
    position: absolute;
    right: 8px;
    bottom: 1px;
    width: 6px;
    height: 6px;
}

.big {
    display: flex;
    flex-direction: column;
    align-items: center;
    gap: 3px;
    padding-top: 5px;
    height: 56px;
}

.big svg {
    height: 25px;
}

.clip {
    width: 151px;
    padding-left: 10px;
    gap: 9px;
}

.clip-col {
    display: flex;
    flex-direction: column;
    gap: 12px;
    padding-top: 4px;
    color: #aaa;
}

.clip-col button {
    display: flex;
    align-items: center;
    gap: 5px;
    height: 16px;
}

.row {
    display: grid;
    align-items: center;
    height: 24px;
}

.row button {
    display: flex;
    align-items: center;
    justify-content: center;
    gap: 3px;
    height: 20px;
}

.font-group,
.para-group {
    flex-direction: column;
    gap: 4px;
}

.font-group {
    width: 297px;
    padding-left: 5px;
}

.row-font1 {
    grid-template-columns: 122px 60px 26px 18px 4px 22px 4px 32px;
}

.row-font2 {
    grid-template-columns: 26px 24px 32px 30px 28px 25px 4px 31px 30px 30px 26px;
}

.para-group {
    width: 231px;
    padding-left: 5px;
}

.row-para1 {
    grid-template-columns: 30px 30px 4px 20px 20px 5px 30px 5px 19px 5px 32px 20px;
}

.row-para2 {
    grid-template-columns: 24px 24px 23px 23px 23px 8px 31px 4px 31px 30px;
}

.row .pressed {
    background: #c6d8f0;
}

.pick {
    position: relative;
    height: 24px;
    border: 1px solid #c8c8cc;
    background: #fff;
}

.pick + .pick {
    border-left: 0;
}

.pick select {
    width: 100%;
    height: 22px;
    padding-left: 3px;
    appearance: none;
}

.pick .caret {
    position: absolute;
    top: 10px;
    right: 3px;
}

.row .glyph {
    gap: 0;
    color: #606060;
    font-size: 14px;
    font-weight: 700;
}

.row .glyph .caret {
    margin-left: 6px;
}

.row .glyph-lg {
    font-size: 16px;
}

.glyph sup,
.glyph sub {
    font-size: 9px;
    line-height: 9px;
}

.glyph sup {
    align-self: flex-start;
}

.glyph sub {
    align-self: flex-end;
}

.row .strike {
    font-size: 12px;
}

.row .strike .caret {
    margin-left: 4px;
}

.strike s {
    text-decoration-color: #d9534f;
}

.digits {
    fill: #555;
    font: 700 5px "Liberation Sans", sans-serif;
}

.find-text {
    fill: #555;
    font: 9px/9px "Liberation Sans", sans-serif;
}

.pinyin small,
.pinyin b {
    display: block;
    font-size: 9px;
    line-height: 8px;
}

.pinyin b {
    color: #4a7fd6;
    line-height: 12px;
}

.style-group {
    width: 340px;
    padding-left: 5px;
    gap: 8px;
}

.gallery {
    display: flex;
    width: 270px;
    height: 52px;
    border: 1px solid #dcdcde;
    background: #fff;
}

.gallery > button {
    display: flex;
    flex-direction: column;
    width: 64px;
    padding: 4px 3px;
    align-items: center;
    overflow: hidden;
}

.gallery > .style-on {
    border: 3px solid #d3def3;
    padding: 1px 0;
}

.demo {
    width: 58px;
    height: 29px;
    overflow: hidden;
    color: #000;
    line-height: 29px;
    text-align: left;
}

.demo-1,
.demo-2,
.demo-3 {
    font-weight: 700;
    line-height: 27px;
}

.demo-1 {
    font-size: 25px;
}

.demo-2 {
    font-size: 20px;
}

.demo-3 {
    font-size: 18px;
}

.gallery-nav {
    display: flex;
    flex: 1;
    flex-direction: column;
    gap: 1px;
    background: #c8c8cc;
}

.gallery-nav button {
    flex: 1;
    line-height: 10px;
    background: #dedee0;
}

.caret-up {
    transform: rotate(180deg);
    border-top-color: #aaa;
}

.caret-more {
    box-shadow: 0 -3px 0 -1px #666;
}

.tool-group {
    justify-content: center;
    width: 79px;
}

.find-group {
    justify-content: space-between;
    width: 123px;
    padding: 0 9px 0 10px;
}

.paper-group {
    justify-content: center;
    width: 66px;
    height: 50px;
    padding-left: 4px;
}

/* speed ball */
.speed {
    position: absolute;
    top: 64px;
    right: 107px;
    width: 128px;
    height: 48px;
}

.speed-pill {
    position: absolute;
    top: 6px;
    right: 0;
    width: 104px;
    height: 38px;
    padding: 4px 0 0 28px;
    border: 1px solid #fff;
    border-radius: 19px;
    background: linear-gradient(#f4f4f4, #d8d8da);
    color: #222;
    box-shadow: 0 0 3px #777;
}

.speed-pill p {
    display: flex;
    align-items: center;
    gap: 12px;
    font-size: 10px;
    line-height: 15px;
}

.speed-plus {
    position: absolute;
    top: 7px;
    right: 4px;
    height: 20px;
}

.speed-ball {
    position: absolute;
    width: 48px;
    height: 48px;
    border: 3px solid #eee;
    border-radius: 50%;
    background: linear-gradient(#127a4b 62%, #45c85a 62%);
    color: #fff;
    font: 14px/42px "Liberation Sans", sans-serif;
    text-align: center;
    box-shadow: 0 1px 4px #666;
}

/* document tabs */
.docbar {
    display: flex;
    flex: none;
    align-items: center;
    height: 26px;
    padding-right: 9px;
}

.quick {
    display: grid;
    grid-template-columns: 22px 23px 21px 22px 22px 23px 22px 6px 26px;
    align-items: center;
    justify-items: center;
    width: 187px;
    padding-left: 1px;
}

.quick button {
    display: flex;
}

.doctabs {
    display: flex;
    align-self: stretch;
}

.doctab {
    display: flex;
    align-items: center;
    gap: 5px;
    width: 200px;
    padding: 0 7px 0 5px;
    background: #f0f0f0;
}

.doctab:nth-child(2) {
    width: 210px;
    padding-left: 2px;
}

.doctab-home {
    width: 104px;
    padding: 0 10px 0 4px;
    gap: 4px;
}

.doctab span {
    flex: 1;
    white-space: nowrap;
}

.doctab-on {
    background: #dae4f1;
    box-shadow: inset 0 -2px #7aa5dc;
}

.doc-icon {
    width: 14px;
    height: 14px;
    color: #4a6cb3;
}

.doc-light {
    color: #4a8fe0;
}

.x {
    width: 8px;
    height: 8px;
}

.doc-add {
    display: flex;
    margin-left: 7px;
}

.doc-list {
    margin-left: auto;
    margin-right: 6px;
}

.search {
    display: flex;
    align-items: center;
    gap: 4px;
    margin-left: 6px;
}

/* work area */
.work {
    display: flex;
    flex: 1;
    min-height: 0;
    overflow: hidden;
}

.canvas {
    flex: 1;
    overflow: hidden;
    padding-top: 20px;
    background: #bfc2cb;
}

.paper {
    width: 792px;
    min-height: 1122px;
    margin: 0 auto;
    background: #fff;
    box-shadow: 0 0 5px #9a9ca6;
}

.drawing {
    display: block;
    fill: #000;
}

.nums,
.marks {
    text-anchor: middle;
}

.nums {
    font-size: 14px;
    font-weight: 700;
}

.marks {
    font-size: 16px;
}

.scroll {
    display: flex;
    flex-direction: column;
    align-items: center;
    width: 19px;
    padding-top: 4px;
    background: #a9abb5;
}

.scroll > svg {
    margin-bottom: 9px;
}

.scroll > svg + svg {
    margin-bottom: 10px;
}

.thumb {
    display: flex;
    align-items: center;
    justify-content: center;
    width: 13px;
    height: 230px;
    background: #cfd0d4;
}

.scroll-end {
    display: flex;
    flex-direction: column;
    align-items: center;
    gap: 11px;
    margin-top: auto;
    padding-bottom: 6px;
}

.side {
    width: 41px;
    background: #ebedef;
}

.grip {
    display: block;
    width: 16px;
    height: 4px;
    margin: 13px auto;
    border: solid #cdd0d8;
    border-width: 1px 0;
}

.side a {
    display: flex;
    flex-direction: column;
    align-items: center;
    gap: 2px;
    height: 50px;
    padding: 10px 1px 0 0;
}

.ico {
    width: 16px;
    height: 16px;
    color: #7c7c7c;
}

.side .side-on {
    background: #fff;
}

.panel {
    width: 260px;
    padding: 6px 17px 0 9px;
    border-top: 1px solid #dcdde0;
    background: #fff;
}

.panel-head {
    display: flex;
    align-items: center;
    gap: 12px;
    height: 18px;
    margin-right: -10px;
}

.panel-head h2 {
    flex: 1;
}

.x-big {
    width: 10px;
    height: 10px;
    color: #777;
}

.panel-tabs {
    display: flex;
    gap: 12px;
    height: 54px;
    margin: 0 -8px 0 1px;
    border-bottom: 1px solid #dcdde0;
}

.panel-tabs a {
    display: flex;
    flex-direction: column;
    align-items: center;
    gap: 6px;
    width: 48px;
    padding-top: 8px;
}

.panel-tabs .panel-on {
    width: 68px;
    border-bottom: 2px solid #5b8be4;
    color: #5b8be4;
    font-weight: 500;
}

.line {
    display: flex;
    align-items: center;
    justify-content: space-between;
}

.line h3 {
    display: flex;
    align-items: center;
    gap: 5px;
    padding-left: 3px;
}

.line-head {
    margin-top: 17px;
    height: 22px;
}

.line-head h3 {
    color: #3c7fd8;
    font-weight: 700;
}

.swatch {
    width: 85px;
    height: 22px;
    border: 1px solid #bbb;
    background: #000;
}

.fills {
    margin-left: 15px;
    padding: 4px 0 2px;
    border-bottom: 1px solid #e8e8ea;
}

.fills label {
    display: flex;
    align-items: center;
    gap: 6px;
    height: 25px;
}

.fills input {
    width: 13px;
    height: 13px;
    margin: 0;
    border: 1px solid #666;
    border-radius: 50%;
    appearance: none;
}

.fills input:checked {
    background: radial-gradient(#222 3px, #fff 4px);
}

.line-color,
.line-alpha {
    padding-left: 15px;
}

.line-color {
    margin-top: 22px;
}

.color {
    display: flex;
    align-items: center;
    gap: 4px;
    width: 65px;
    height: 24px;
    padding-left: 3px;
    border: 1px solid #ccc;
}

.color span {
    width: 46px;
    height: 16px;
    background: #000;
}

.line-alpha {
    height: 46px;
}

.slider {
    display: flex;
    align-items: center;
}

.slider button {
    display: flex;
}

.track {
    position: relative;
    width: 72px;
    height: 17px;
    background:
        linear-gradient(#999, #999) 0 8px / 100% 1px no-repeat,
        linear-gradient(#999, #999) 63px 7px / 1px 3px no-repeat;
}

.track output {
    position: absolute;
    bottom: 8px;
    left: 1px;
    color: #999;
}

.track input {
    display: block;
    width: 60px;
    height: 8px;
    margin: 8px 0 0 7px;
    background: none;
    appearance: none;
}

.track input::-webkit-slider-thumb {
    width: 8px;
    height: 8px;
    background: #888;
    clip-path: polygon(50% 0, 100% 100%, 0 100%);
    appearance: none;
}

.line-outline {
    margin-top: 8px;
}

.none-btn {
    width: 85px;
    height: 22px;
    border: 1px solid #bbb;
    border-radius: 2px;
}

.edge {
    display: flex;
    align-items: center;
    width: 7px;
    padding-top: 42px;
    background: #dcdde0;
}

.edge button {
    width: 7px;
    height: 100px;
    background: #3b7bd0;
}

.edge i {
    display: block;
    margin-left: 2px;
    width: 0;
    border: 3px solid transparent;
    border-left-color: #fff;
    border-right-width: 0;
}

/* status bar */
.status {
    display: flex;
    flex: none;
    align-items: center;
    height: 22px;
    padding-left: 8px;
    background: #dedee0;
    white-space: nowrap;
}

.status > span {
    line-height: 14px;
    margin-top: 1px;
}

.st-page {
    width: 48px;
}

.st-pages {
    width: 60px;
}

.st-sec {
    width: 42px;
}

.st-row {
    width: 37px;
    padding-left: 4px;
}

.st-col {
    width: 31px;
}

.st-num {
    width: 48px;
    padding-left: 6px;
}

.st-sec,
.st-col,
.st-num,
.st-spell {
    border-right: 1px solid #aaa;
}

.st-spell {
    display: flex;
    align-items: center;
    gap: 4px;
    width: 67px;
    padding-left: 4px;
}

.st-spell i {
    width: 7px;
    height: 7px;
    background: #55b03b;
}

.views {
    display: flex;
    align-self: stretch;
    margin-left: auto;
    padding-right: 320px;
}

.views button {
    display: flex;
    align-items: center;
    justify-content: center;
    width: 37px;
}

.views .view-on {
    background: #c6d8f0;
}

/* update notice */
.notice {
    position: absolute;
    right: 1px;
    bottom: 41px;
    width: 314px;
    height: 129px;
    padding: 0 4px;
    border: 1px solid #626a80;
    border-top-color: #3f5fae;
    background: #f8f8f8;
    box-shadow: inset 0 2px #7b93d6;
}

.notice header {
    display: flex;
    align-items: center;
    height: 33px;
    padding: 2px 0 0 2px;
    border-bottom: 1px solid #e2e2e4;
    color: #4a80d4;
}

.notice strong {
    margin-left: 5px;
    font-size: 15px;
}

.office {
    width: 39px;
    color: #6d9fe2;
    font-family: Lato, sans-serif;
    font-size: 14px;
}

.notice ul {
    padding: 11px 0 0 25px;
}

.notice li {
    display: flex;
    align-items: center;
    height: 20px;
    gap: 2px;
}

.notice li::before {
    content: "";
    width: 4px;
    height: 4px;
    margin-right: 8px;
    background: #7b93d6;
}

.mono {
    font-family: "Liberation Mono", monospace;
    font-size: 10px;
}

.notice-foot {
    display: flex;
    align-items: center;
    justify-content: space-between;
    padding: 1px 16px 0 23px;
}

.notice-foot p {
    display: flex;
    align-items: center;
    gap: 6px;
}

.notice-foot a {
    color: #2a50a8;
}

.notice-foot button {
    width: 67px;
    height: 22px;
    border: 1px solid #6d9a50;
    background: #82b065;
    color: #fff;
}

/* task bar */
.taskbar {
    position: relative;
    display: flex;
    flex: none;
    align-items: center;
    height: 40px;
    background: linear-gradient(90deg, #35788c, #2f7389 25%, #4a8ba3 45%, #43809a 60%, #3c7690 75%, #3a6c80);
    color: #fff;
}

.taskbar > * {
    position: relative;
}

.taskbar .sky {
    position: absolute;
    width: 100%;
    height: 100%;
    overflow: hidden;
}

.apps {
    display: grid;
    grid-template-columns: 50px 61px 68px 57px 66px 60px;
    width: 364px;
}

.apps button {
    display: flex;
    align-items: center;
    justify-content: center;
}

.task {
    display: flex;
    align-items: center;
    gap: 4px;
    width: 158px;
    height: 38px;
    padding-left: 8px;
    border: 1px solid #d8e6ea;
    background: #9cc2cc99;
}

.tray {
    display: flex;
    align-items: center;
    gap: 8px;
    margin-left: auto;
    padding-top: 2px;
}

.clock {
    width: 130px;
    padding-top: 3px;
    line-height: 18px;
    text-align: center;
}
```
